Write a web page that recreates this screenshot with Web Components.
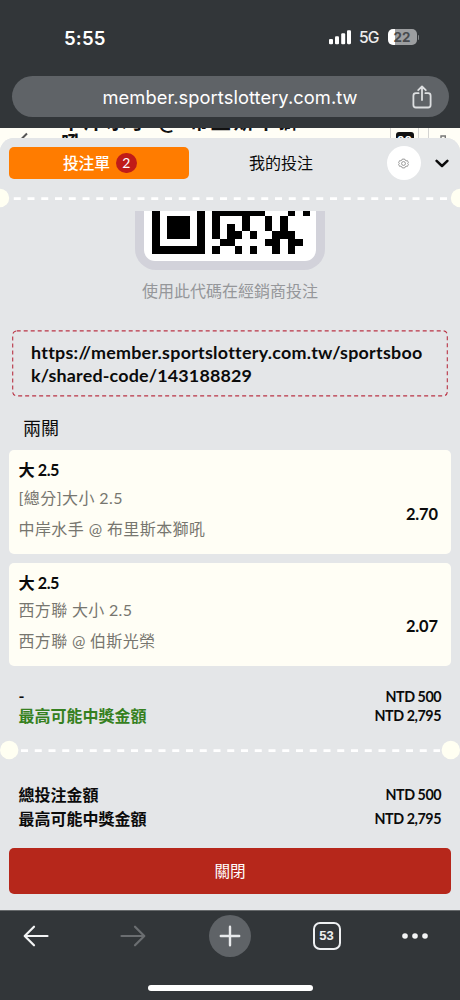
<!DOCTYPE html>
<html lang="zh-Hant">
<head>
<meta charset="utf-8">
<title>投注單</title>
<style>
html,body{margin:0;padding:0}
body{width:460px;height:1000px;overflow:hidden;background:#323639;font-family:Lato,"Noto Sans CJK TC",sans-serif;color:#0b0b0b}
</style>
</head>
<body>
<phone-screen></phone-screen>
<script>
function define(name, markup, after){
  const t=document.createElement('template');
  t.innerHTML=markup;
  customElements.define(name,class extends HTMLElement{
    connectedCallback(){
      if(this.shadowRoot)return;
      this.attachShadow({mode:'open'}).appendChild(t.content.cloneNode(true));
      if(after)after.call(this,this.shadowRoot);
    }
  });
}

/* A single line of text tracked to an exact width */
define('fit-text',`<style>:host{display:block;white-space:nowrap}span{display:inline-block}</style><span><slot></slot></span>`,function(root){
  const w=parseFloat(this.getAttribute('w'));
  const s=root.querySelector('span');
  const n=[...this.textContent].length;
  const natural=s.getBoundingClientRect().width;
  if(w&&natural){
    const ls=(w-natural)/(n-1);
    s.style.letterSpacing=ls+'px';
    s.style.marginRight=(-ls)+'px';
  }
});

define('status-bar',`<style>
:host{display:flex;height:76px;box-sizing:border-box;padding:27px 41px 0 64px;align-items:flex-start;color:#fff;font-family:Inter,sans-serif}
.time{font-size:18.6px;font-weight:600;line-height:22px}
.right{margin-left:auto;display:flex;gap:8px;align-items:flex-start}
.g{font-size:15.6px;font-weight:500;line-height:22px;color:#eee}
svg{display:block}
.bars{margin-top:3px}
.bat{display:flex;margin-top:2px;align-items:center}
.cell{width:29px;height:16px;border-radius:5px;background:linear-gradient(90deg,#fff 6.5px,#9c9ea0 6.5px);font-size:13.4px;font-weight:700;line-height:16px;text-align:center;color:#484b4e}
.cap{width:1.5px;height:5px;border-radius:0 2px 2px 0;background:#85888a;margin-left:1px}
</style>
<fit-text class="time" w="41.5">5:55</fit-text>
<div class="right">
<svg class="bars" width="22" height="15" viewBox="0 0 22 15" fill="#fff"><rect x="0" y="9" width="4" height="5.3" rx="1.1"/><rect x="6" y="6.3" width="4" height="8" rx="1.1"/><rect x="12.2" y="3.3" width="4" height="11" rx="1.1"/><rect x="18" y="0.2" width="4" height="14" rx="1.1"/></svg>
<fit-text class="g" w="20.5">5G</fit-text>
<div class="bat"><div class="cell">22</div><div class="cap"></div></div>
</div>`);

define('address-bar',`<style>
:host{display:block;height:52px;padding:0 11.5px}
.pill{height:41px;border-radius:21px;background:#5f6367;display:flex;align-items:center;padding:0 17px 0 91px;color:#fff;font:400 18.3px/40px Inter,sans-serif}
svg{margin-left:auto;display:block}
</style>
<div class="pill"><fit-text w="255">member.sportslottery.com.tw</fit-text>
<svg width="20" height="24" viewBox="0 0 20 24" fill="none" stroke="#dddfe1" stroke-width="1.8" stroke-linecap="round" stroke-linejoin="round"><path d="M6.6 8.2H3.9A2.5 2.5 0 0 0 1.4 10.7V20A2.5 2.5 0 0 0 3.9 22.5H16.1A2.5 2.5 0 0 0 18.6 20V10.7A2.5 2.5 0 0 0 16.1 8.2H13.4M10 15V1.6M6.2 5.2L10 1.5L13.8 5.2"/></svg></div>`);

define('page-peek',`<style>
:host{display:flex;height:10px;overflow:hidden;background:#fffef6;color:#111;align-items:flex-start}
.back{margin-left:20px;width:12px;flex:none;display:block}
.title{margin:-19.5px 0 0 29px;width:240px;font:700 20.5px/22px "Noto Sans CJK TC",sans-serif}
.a{margin-left:91px;width:29px;height:20px;border:solid #d4d4d2;border-width:0 1px;display:flex;justify-content:center;box-sizing:border-box;flex:none}
.n{margin-top:4px;width:18px;height:16px;border-radius:3px 3px 0 0;background:#111;color:#fff;font:700 11px/16px Inter,sans-serif;text-align:center}
.b{margin-left:9px;width:40px;height:20px;border-left:1px solid #d4d4d2;flex:none}
</style>
<svg class="back" width="12" height="12" viewBox="0 0 12 12"><path d="M7 5.5L1 11.5" stroke="#555" stroke-width="2" fill="none"/></svg>
<div class="title"><fit-text w="238">中岸水手 @ 布里斯本獅</fit-text><div>吼</div></div>
<div class="a"><div class="n">00</div></div>
<div class="b"><svg width="28" height="12" viewBox="0 0 28 12" fill="none" stroke="#777" stroke-width="1.4"><path d="M12 12V4H16.3V12M19 8.5H24"/></svg></div>`);

define('slip-tabs',`<style>
:host{display:flex;height:50px;padding:0 9px;align-items:center;box-sizing:border-box;background:#e4e6e8;flex:none}
.on{width:179.5px;height:32px;border-radius:5px;background:#ff7c00;color:#fff;display:flex;align-items:center;justify-content:center;gap:6px;font-size:15.8px;font-weight:700;line-height:32px;padding-left:2px;box-sizing:border-box}
.on fit-text{font-weight:500}
.badge{width:20.5px;height:20.5px;border-radius:50%;background:#c01c18;font-size:14px;line-height:20.5px;font-weight:400;text-align:center}
.off{margin-left:60.5px;font-size:16px;line-height:32px}
.gear{margin-left:74px;width:34px;height:34px;border-radius:50%;background:#fff;display:flex;align-items:center;justify-content:center}
.chev{margin-left:14px}
svg{display:block}
</style>
<div class="on"><fit-text w="47">投注單</fit-text><div class="badge">2</div></div>
<fit-text class="off" w="64">我的投注</fit-text>
<div class="gear"><svg width="11" height="11" viewBox="0 0 12 12" fill="none" stroke="#777" stroke-width=".8"><path d="M4.7 1.2H7.3L7.7 2.3L9 3L10.2 2.8L11.4 5.2L10.6 6L11.4 6.9L10.2 9.2L9 9L7.7 9.7L7.3 10.8H4.7L4.3 9.7L3 9L1.8 9.2L.6 6.9L1.4 6L.6 5.2L1.8 2.8L3 3L4.3 2.3Z" stroke-linejoin="round"/><circle cx="6" cy="6" r="2.1"/></svg></div>
<svg class="chev" width="14" height="9" viewBox="0 0 14 9" fill="none" stroke="#0b0b0b" stroke-width="2.5" stroke-linecap="round" stroke-linejoin="round"><path d="M1.6 1.8L7 7L12.4 1.8"/></svg>`);

define('ticket-divider',`<style>:host{display:block;height:20px;flex:none}svg{display:block}</style>
<svg width="460" height="20" viewBox="0 0 460 20"><line y1="10.6" y2="10.6" x2="446.8" stroke="#fff" stroke-width="2.6" stroke-dasharray="7 6.75"/><circle cy="10" r="9.2" fill="#fffff2"/><circle cy="10" r="9.2" fill="#fffff2"/></svg>`,function(root){
  const inset=+this.getAttribute('inset'),start=+this.getAttribute('start'),end=+this.getAttribute('end');
  const l=root.querySelector('line'),c=root.querySelectorAll('circle');
  l.setAttribute('x1',start);l.setAttribute('x2',end);
  c[0].setAttribute('cx',inset);c[1].setAttribute('cx',460-inset);
});

define('qr-code',`<style>
:host{display:flex;justify-content:center;height:59px;overflow:hidden;flex:none}
.frame{width:172px;height:50px;border:solid #d2d2da;border-width:0 9px 9px;border-radius:0 0 21px 21px;background:#d2d2da}
.paper{height:50px;background:#fff;border-radius:0 0 11px 11px}
svg{display:block;padding-left:8.3px}
</style><div class="frame"><div class="paper"><svg width="160" height="43" viewBox="0 0 160 43" shape-rendering="crispEdges" fill="#000"></svg></div></div>`,function(root){
  const rows=['1000001011111110001010','1011101010001001010000','1011101010101001010000','1011101010110100111000','1000001001100001101100','1111111010010100101000'];
  const m=7.53,bottom=43;let out='';
  rows.forEach((r,y)=>[...r].forEach((v,x)=>{
    if(v==='1')out+='<rect x="'+Math.round(x*m)+'" y="'+Math.round(bottom-(6-y)*m)+'" width="'+(Math.round((x+1)*m)-Math.round(x*m))+'" height="'+(Math.round(bottom-(5-y)*m)-Math.round(bottom-(6-y)*m))+'"/>';
  }));
  root.querySelector('svg').innerHTML=out;
});

define('share-link',`<style>
:host{display:block;margin:0 12px;flex:none}
.box{position:relative;height:67px;box-sizing:border-box;padding:11px 0 0 19px;font-size:17.9px;font-weight:700;line-height:23px}
svg{position:absolute;inset:0}
</style><div class="box"><svg width="436" height="67"><rect x=".7" y=".9" width="434.6" height="65" rx="4" fill="none" stroke="#b93344" stroke-width="1.1" stroke-dasharray="4 3"/></svg>
<fit-text w="389.8">https://member.sportslottery.com.tw/sportsboo</fit-text><fit-text w="221">k/shared-code/143188829</fit-text></div>`);

define('bet-card',`<style>
:host{display:flex;flex:none;align-items:center;height:103.5px;margin:0 9px;padding:0 13px 0 9.5px;border-radius:5px;background:#fffef5;justify-content:space-between}
.t{font-size:16.2px;font-weight:700;line-height:24px}
.s{font-size:16px;color:#77766f;line-height:31px}
.t+.s{margin-top:-.5px}
.l{padding-bottom:2px}
.odds{font-size:16.4px;font-weight:700;padding-top:23px}
</style><div class="l"><div class="t"><slot name="pick"></slot></div><div class="s"><slot name="market"></slot></div><div class="s"><slot name="match"></slot></div></div><div class="odds"><slot name="odds"></slot></div>`);

define('sum-row',`<style>
:host{display:flex;flex:none;justify-content:space-between;align-items:center;padding:0 18.5px;font-weight:700;font-size:16px}
.v{color:#0b0b0b;font-size:14.3px;padding-top:1px}
</style><div><slot></slot></div><div class="v"><slot name="v"></slot></div>`);

define('slip-sheet',`<style>
:host{display:flex;flex-direction:column;height:772px;box-sizing:border-box;border-radius:14px 14px 0 0;background:#e4e6e8;overflow:hidden}
.cap{margin:8.5px 0 0 142px;font-size:16px;line-height:24px;color:#95979a}
share-link{margin-top:27px}
h3{margin:18px 0 9.5px 23px;font-size:18px;font-weight:400;line-height:26px}
.gap{height:9px}
.green{color:#358020;height:19px}
.d{height:19px}
.tot{height:24px}
button{margin:18px 9px 0;height:46px;border:0;border-radius:5px;background:#b6271b;color:#fff;font:400 15.6px/45px "Noto Sans CJK TC",sans-serif;display:block;padding:0}
</style>
<slip-tabs></slip-tabs>
<ticket-divider inset="0" start="0" end="448" style="margin-top:-.5px"></ticket-divider>
<qr-code style="margin-top:3.5px"></qr-code>
<fit-text class="cap" w="176">使用此代碼在經銷商投注</fit-text>
<share-link></share-link>
<h3>兩關</h3>
<bet-card><fit-text slot="pick" w="41">大 2.5</fit-text><fit-text slot="market" w="104">[總分]大小 2.5</fit-text><fit-text slot="match" w="186.5">中岸水手 @ 布里斯本獅吼</fit-text><fit-text slot="odds" w="32">2.70</fit-text></bet-card>
<div class="gap"></div>
<bet-card><fit-text slot="pick" w="41">大 2.5</fit-text><fit-text slot="market" w="113.5">西方聯 大小 2.5</fit-text><fit-text slot="match" w="136.5">西方聯 @ 伯斯光榮</fit-text><fit-text slot="odds" w="32">2.07</fit-text></bet-card>
<sum-row class="d" style="margin-top:20px">-<fit-text slot="v" w="56">NTD 500</fit-text></sum-row>
<sum-row class="green"><fit-text w="128">最高可能中獎金額</fit-text><fit-text slot="v" w="67">NTD 2,795</fit-text></sum-row>
<ticket-divider inset="9.2" start="21" end="440" style="margin-top:16px"></ticket-divider>
<sum-row class="tot" style="margin-top:21.5px"><fit-text w="80">總投注金額</fit-text><fit-text slot="v" w="56">NTD 500</fit-text></sum-row>
<sum-row class="tot"><fit-text w="128">最高可能中獎金額</fit-text><fit-text slot="v" w="67">NTD 2,795</fit-text></sum-row>
<button>關閉</button>`);

define('browser-toolbar',`<style>
:host{display:flex;flex-direction:column;align-items:center;height:90px;background:#323639;box-sizing:border-box;border-top:1px solid #66696b;padding-top:4px}
.row{display:flex;align-items:center;width:460px;height:42px;box-sizing:border-box;padding-left:23px}
svg{display:block}
.fwd{margin-left:71px}
.plus{margin-left:63px;width:42px;height:42px;border-radius:50%;background:#5f6367;display:flex;align-items:center;justify-content:center}
.tabs{margin-left:61.5px;width:28px;height:28px;box-sizing:border-box;border:2px solid #eef0f2;border-radius:7px;color:#eef0f2;font:700 13px/24px "Liberation Sans",sans-serif;text-align:center}
.more{margin-left:61.5px}
.home{margin-top:28px;width:165px;height:6px;border-radius:3px;background:#fff}
</style>
<div class="row">
<svg width="26" height="22" viewBox="0 0 26 22" fill="none" stroke="#f3f4f5" stroke-width="2.2" stroke-linecap="round" stroke-linejoin="round"><path d="M24.5 11H2M11 1.7L1.7 11L11 20.3"/></svg>
<svg class="fwd" width="26" height="22" viewBox="0 0 26 22" fill="none" stroke="#6b6e71" stroke-width="2.2" stroke-linecap="round" stroke-linejoin="round"><path d="M1.5 11H24M15 1.7L24.3 11L15 20.3"/></svg>
<div class="plus"><svg width="22" height="22" viewBox="0 0 22 22" stroke="#e8eaec" stroke-width="2.4" stroke-linecap="round"><path d="M1.8 11H20.2M11 1.8V20.2"/></svg></div>
<div class="tabs">53</div>
<svg class="more" width="26" height="6" viewBox="0 0 26 6" fill="#f3f4f5"><circle cx="3" cy="3" r="2.8"/><circle cx="13" cy="3" r="2.8"/><circle cx="23" cy="3" r="2.8"/></svg>
</div>
<div class="home"></div>`);

define('phone-screen',`<style>:host{display:flex;flex-direction:column;width:460px;height:1000px;background:#323639}
.page{height:782px;background:#fffef6}</style>
<status-bar></status-bar><address-bar></address-bar><div class="page"><page-peek></page-peek><slip-sheet></slip-sheet></div><browser-toolbar></browser-toolbar>`);
</script>
</body>
</html>
